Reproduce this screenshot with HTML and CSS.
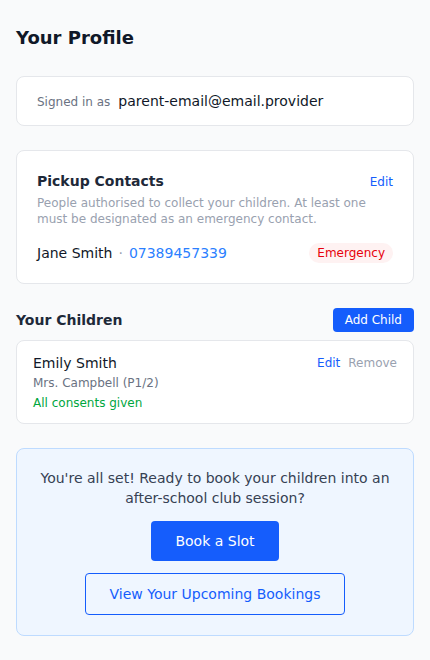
FILE: index.html
```html
<!DOCTYPE html>
<html lang="en">
<head>
<meta charset="utf-8">
<title>Your Profile</title>
<link rel="stylesheet" href="styles.css">
</head>
<body>
<main class="page">
  <h1 class="title">Your Profile</h1>

  <section class="card signed">
    <span class="signed-label">Signed in as</span>
    <span class="signed-email">parent-email@email.provider</span>
  </section>

  <section class="card contacts">
    <div class="row-between">
      <h2 class="card-title">Pickup Contacts</h2>
      <a class="link" href="#">Edit</a>
    </div>
    <p class="desc">People authorised to collect your children. At least one must be designated as an emergency contact.</p>
    <div class="contact-row">
      <div class="contact">
        <span class="contact-name">Jane Smith</span>
        <span class="dot">·</span>
        <span class="phone">07389457339</span>
      </div>
      <span class="badge">Emergency</span>
    </div>
  </section>

  <section class="children">
    <div class="row-between children-head">
      <h2 class="section-title">Your Children</h2>
      <button class="btn-small">Add Child</button>
    </div>
    <div class="card child">
      <div class="child-info">
        <div class="child-name">Emily Smith</div>
        <div class="child-class">Mrs. Campbell (P1/2)</div>
        <div class="child-consent">All consents given</div>
      </div>
      <div class="child-actions">
        <a class="link" href="#">Edit</a>
        <a class="link-muted" href="#">Remove</a>
      </div>
    </div>
  </section>

  <section class="ready">
    <p class="ready-text">You're all set! Ready to book your children into an after-school club session?</p>
    <button class="btn-primary">Book a Slot</button>
    <button class="btn-outline">View Your Upcoming Bookings</button>
  </section>
</main>
</body>
</html>
```

FILE: styles.css
```css
* { box-sizing: border-box; }
html, body { margin: 0; padding: 0; }
body {
  background: #f9fafb;
  font-family: "DejaVu Sans", "Liberation Sans", sans-serif;
  color: #101828;
}
.page {
  padding: 24px 16px 24px;
  display: flex;
  flex-direction: column;
}
.title {
  margin: 0 0 24px;
  font-size: 18px;
  line-height: 28px;
  font-weight: 700;
  color: #101828;
}
.card {
  background: #fff;
  border: 1px solid #e5e7eb;
  border-radius: 8px;
}
.signed {
  height: 50px;
  padding: 0 20px;
  display: flex;
  align-items: center;
  gap: 8px;
  margin-bottom: 24px;
}
.signed-label { font-size: 12px; line-height: 18px; color: #6a7282; padding-top: 1px; }
.signed-email { font-size: 14px; line-height: 18px; color: #101828; }

.contacts { padding: 20px; margin-bottom: 24px; }
.row-between {
  display: flex;
  justify-content: space-between;
  align-items: center;
}
.card-title {
  margin: 0;
  font-size: 14px;
  line-height: 21px;
  font-weight: 700;
  color: #1e2939;
}
.link { color: #155dfc; text-decoration: none; font-size: 12px; line-height: 20px; }
.link-muted { color: #99a1af; text-decoration: none; font-size: 12px; line-height: 20px; }
.desc {
  margin: 3px 0 0;
  font-size: 12px;
  line-height: 16px;
  color: #99a1af;
}
.contact-row {
  margin-top: 16px;
  display: flex;
  justify-content: space-between;
  align-items: center;
}
.contact { display: flex; align-items: baseline; gap: 6px; font-size: 14px; }
.contact-name { color: #101828; }
.dot { color: #99a1af; }
.phone { color: #2b7fff; }
.badge {
  background: #fef2f2;
  color: #e7000b;
  font-size: 12px;
  line-height: 20px;
  padding: 0 8px;
  border-radius: 10px;
}

.children { margin-bottom: 24px; }
.children-head { margin-bottom: 8px; }
.section-title {
  margin: 0;
  font-size: 14px;
  line-height: 20px;
  font-weight: 700;
  color: #1e2939;
}
.btn-small {
  font-family: inherit;
  background: #155dfc;
  color: #fff;
  border: 0;
  border-radius: 4px;
  font-size: 12px;
  line-height: 16px;
  padding: 4px 12px;
}
.child {
  padding: 12px 16px 10px;
  display: flex;
  justify-content: space-between;
  align-items: flex-start;
}
.child-name { font-size: 14px; line-height: 20px; color: #101828; }
.child-class { font-size: 12px; line-height: 20px; color: #6a7282; }
.child-consent { font-size: 12px; line-height: 20px; color: #00a63e; }
.child-actions { display: flex; gap: 8px; }

.ready {
  background: #eff6ff;
  border: 1px solid #bedbff;
  border-radius: 8px;
  padding: 19px 20px 20px;
  display: flex;
  flex-direction: column;
  align-items: center;
}
.ready-text {
  margin: 0 0 13px;
  text-align: center;
  font-size: 14px;
  line-height: 20px;
  color: #364153;
}
.btn-primary {
  font-family: inherit;
  background: #155dfc;
  color: #fff;
  border: 0;
  border-radius: 4px;
  font-size: 14px;
  line-height: 20px;
  padding: 10px 24px;
  margin-bottom: 12px;
}
.btn-outline {
  font-family: inherit;
  background: transparent;
  color: #155dfc;
  border: 1px solid #155dfc;
  border-radius: 4px;
  font-size: 14px;
  line-height: 20px;
  padding: 10px 24px;
}
```
